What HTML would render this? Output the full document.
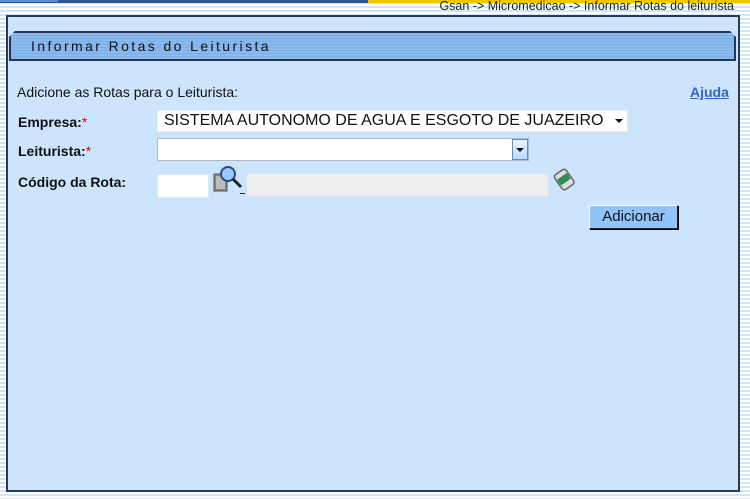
<!DOCTYPE html>
<html><head><meta charset="utf-8"><style>
*{margin:0;padding:0;box-sizing:border-box}
body{width:750px;height:499px;overflow:hidden;position:relative;font-family:"Liberation Sans",Arial,sans-serif;
background:repeating-linear-gradient(to bottom,#ffffff 0,#ffffff 2px,#cfe6f7 2px,#cfe6f7 4px);}
.topbar{position:absolute;left:0;top:0;width:750px;height:3px;background:#2c5592}
.topbar .l{position:absolute;left:0;top:0;width:58px;height:2px;background:#5a8ed0}
.topbar .o{position:absolute;left:368px;top:0;width:382px;height:3px;background:#f5c400}
.crumb{position:absolute;right:16px;top:-1px;font-size:12.5px;color:#222}
.panel{position:absolute;left:6px;top:15px;width:734px;height:477px;background:#cce5fc;border:2px solid #2c3b55}
.title{position:absolute;left:1px;top:14px;width:727px;height:30px;background:repeating-linear-gradient(to bottom,#8ab9ee 0,#8ab9ee 2px,#7eaee6 2px,#7eaee6 3px);border:2px solid #2a3550;clip-path:polygon(6px 0,calc(100% - 6px) 0,100% 6px,100% 100%,0 100%,0 6px)}
.title span{position:absolute;left:20px;top:5px;font-size:14px;letter-spacing:2.4px;color:#111}
.t{position:absolute;font-size:14px;color:#111}
.b{font-weight:bold}
.req{color:#e00;font-weight:normal}
.sel{position:absolute;background:#fff;border:1px solid #c8d4e0}
</style></head><body>
<div class="topbar"><div class="l"></div><div class="o"></div></div>
<div class="crumb">Gsan -&gt; Micromedicao -&gt; Informar Rotas do leiturista</div>
<div class="panel">
 <div class="title"><span>Informar Rotas do Leiturista</span></div>
 <div class="t" style="left:9px;top:67px">Adicione as Rotas para o Leiturista:</div>
 <div class="t b" style="left:682px;top:67px;color:#3465c6;text-decoration:underline">Ajuda</div>
 <div class="t b" style="left:10px;top:97px">Empresa:<span class="req">*</span></div>
 <div class="t b" style="left:10px;top:126px">Leiturista:<span class="req">*</span></div>
 <div class="t b" style="left:10px;top:157px">Código da Rota:</div>
 <div class="sel" style="left:149px;top:93px;width:471px;height:22px;border-color:#e8eef4"><span style="position:absolute;left:6px;top:1px;font-size:16px;color:#111">SISTEMA AUTONOMO DE AGUA E ESGOTO DE JUAZEIRO</span><span style="position:absolute;right:4px;top:8px;width:0;height:0;border-left:4px solid transparent;border-right:4px solid transparent;border-top:4px solid #111"></span></div>
 <div class="sel" style="left:149px;top:121px;width:372px;height:23px;border-color:#b0b8c4"><span style="position:absolute;right:0;top:0;width:16px;height:21px;background:linear-gradient(#eaf4ff,#b8dcf8);border:1px solid #5c8cc4"></span><span style="position:absolute;right:4px;top:9px;width:0;height:0;border-left:4px solid transparent;border-right:4px solid transparent;border-top:4px solid #111"></span></div>
 <div class="sel" style="left:149px;top:157px;width:52px;height:24px;border-color:#e0e8f0"></div>
 <svg style="position:absolute;left:205px;top:148px" width="32" height="30" viewBox="0 0 32 30">
  <rect x="1" y="9" width="13" height="17" fill="#888" stroke="#555"/><rect x="3" y="11" width="9" height="13" fill="#bbb"/>
  <circle cx="15" cy="9" r="7" fill="#9cc8ff" stroke="#2a4a7a" stroke-width="2"/>
  <line x1="20" y1="14" x2="28" y2="22" stroke="#222" stroke-width="3"/>
 </svg>
 <div style="position:absolute;left:232px;top:176px;width:5px;height:1px;background:#222"></div>
 <div style="position:absolute;left:239px;top:157px;width:301px;height:22px;background:#eeeeee"></div>
 <svg style="position:absolute;left:544px;top:149px" width="26" height="26" viewBox="0 0 26 26">
  <g transform="rotate(-35 13 13)"><rect x="5" y="4" width="14" height="18" rx="3" fill="#ddd" stroke="#666" stroke-width="1.5"/><rect x="6" y="9" width="12" height="7" fill="#2d8c5a"/></g>
 </svg>
 <div style="position:absolute;left:581px;top:188px;width:89px;height:24px;background:#90c4f8;border:1px solid #223;border-top-color:#fff;border-left-color:#fff;box-shadow:1px 1px 0 #000"><span style="position:absolute;left:0;width:100%;text-align:center;top:2px;font-size:15px;color:#111">Adicionar</span></div>
</div>
</body></html>
